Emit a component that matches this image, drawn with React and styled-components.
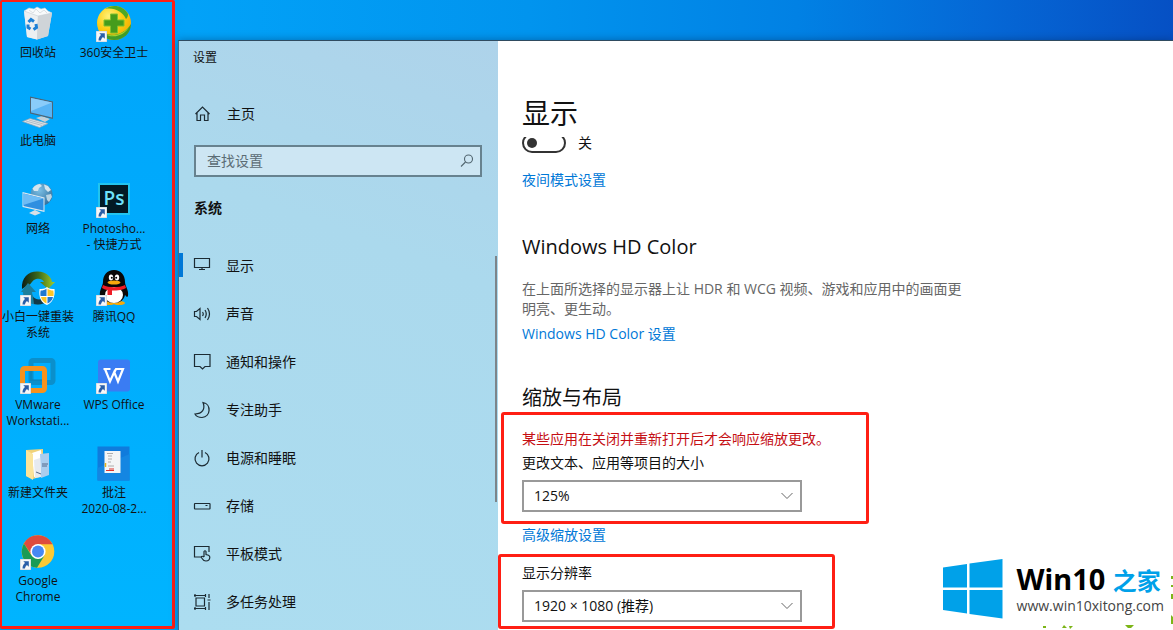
import React, { useState } from "react";
import styled, { createGlobalStyle } from "styled-components";

const GlobalStyle = createGlobalStyle`
  * {
    box-sizing: border-box;
  }

  body {
    margin: 0;
    font-family: "Open Sans", "Noto Sans CJK SC", sans-serif;
    font-size: 14px;
    line-height: 20px;
    color: #111;
  }

  button, input, select {
    font: inherit;
    color: inherit;
  }
`;

/* ---------- desktop icons ---------- */

const RecycleBinIcon = () => (
  <svg viewBox="0 0 36 36">
    <path d="M4 5L32 7L28 30L17 33.5L7 31Z" fill="#d5dade" />
    <path d="M4 5L18 9L17 33.5L7 31Z" fill="#eceff1" />
    <path d="M18 9L32 7L28 30L17 33.5Z" fill="#cfd4d8" />
    <path d="M4 5L9 2L14 3L17 1L21 3L25 2L28 5L32 7L18 10Z" fill="#f8fafb" stroke="#c8ced3" strokeWidth="0.6" />
    <path d="M9 4L13 7L16 3L20 7L24 4L27 7" fill="none" stroke="#d3d8dc" strokeWidth="0.8" />
    <path d="M8.500 16L11 13.500L14 15.500M16 18L16.500 21.500L13.500 23.500M10.500 23L8 21.500L8 18.500" fill="none" stroke="#1c7fd6" strokeWidth="3" />
  </svg>
);

const Safe360Icon = () => (
  <svg viewBox="0 0 36 36">
    <defs>
      <radialGradient id="safe" cx="0.35" cy="0.3" r="0.8">
        <stop offset="0" stopColor="#fff27a" />
        <stop offset="0.5" stopColor="#fccd12" />
        <stop offset="1" stopColor="#f0a800" />
      </radialGradient>
    </defs>
    <circle cx="18" cy="17" r="17" fill="url(#safe)" />
    <path d="M9 3C16 -2 27 -1 32 8C32 11 31 12 30 13C27 6 18 1 9 3Z" fill="#4ea825" />
    <path d="M35 18C35 29 24 37 12 33C7 31 4 28 3 25C12 31 27 31 35 18Z" fill="#3f9c2a" />
    <path d="M7 27C14 31 25 30 33 21C29 29 17 34 7 27Z" fill="#a8d32a" />
    <path d="M14.500 8H21.500V14H28V20H21.500V27H14.500V20H8V14H14.500Z" fill="#459c1c" stroke="#7fc02c" strokeWidth="1" />
  </svg>
);

const ComputerIcon = () => (
  <svg viewBox="0 0 36 36">
    <path d="M16 24L22 22L30 25L25 28Z" fill="#c4d0d8" />
    <path d="M10 2.500L33 7.500V25L10 19.500Z" fill="#4c6678" />
    <path d="M11 4L32 8.500V23.500L11 18.500Z" fill="#58b4f5" />
    <path d="M11 4L32 8.500L11 17Z" fill="#8accfa" />
    <path d="M2.500 27.500L10 24.500L28 29.500L19.500 33.500Z" fill="#dde4e9" stroke="#93a4af" strokeWidth="0.7" />
    <path d="M6 27L22 31.500M9 26L25 30.500" stroke="#9dacb6" strokeWidth="0.7" />
  </svg>
);

const NetworkIcon = () => (
  <svg viewBox="0 0 36 36">
    <defs>
      <radialGradient id="globe" cx="0.4" cy="0.3" r="0.75">
        <stop offset="0" stopColor="#7cc0e6" />
        <stop offset="1" stopColor="#2f6e9c" />
      </radialGradient>
    </defs>
    <circle cx="21.500" cy="12.500" r="11" fill="url(#globe)" />
    <path d="M12.500 6.500C15 3 18 2 20 2L22 4L19 6L18 9L14 9Z" fill="#d3e6f0" />
    <path d="M24 2.500L28 4L31 8L28 10L25 7Z" fill="#d3e6f0" />
    <path d="M26 13L31 12L32 15L29 20L27 18Z" fill="#b8d4e3" />
    <path d="M9 31L15 28L21 31L15 33.500Z" fill="#d7e0e6" />
    <path d="M2.500 10L24.500 15.500V30L2.500 25Z" fill="#dbe8f0" />
    <path d="M3.500 11.500L23.500 16.500V28.500L3.500 24Z" fill="#2f8fe0" />
    <path d="M3.500 11.500L23.500 16.500L3.500 23Z" fill="#6dbcf5" />
  </svg>
);

const PhotoshopIcon = () => (
  <svg viewBox="0 0 36 36">
    <rect x="2" y="1" width="32" height="32" fill="#22c4ee" />
    <rect x="4" y="3" width="28" height="28" fill="#021a24" />
    <text x="18" y="23" fill="#6fe3fb" fontSize="19" fontWeight="600" textAnchor="middle" fontFamily="Open Sans">
      Ps
    </text>
  </svg>
);

const ReinstallIcon = () => (
  <svg viewBox="0 0 36 36">
    <defs>
      <linearGradient id="swoop">
        <stop offset="0" stopColor="#0d1c14" />
        <stop offset="0.5" stopColor="#3c6b1e" />
        <stop offset="1" stopColor="#a6cf25" />
      </linearGradient>
    </defs>
    <path d="M2 19C1 7 9 1 18 1.500C26 2 31 6 32 12H35L28 19L20 12H24C22 8 17 8 14 10C11 12 11 15 8 15Z" fill="url(#swoop)" />
    <path d="M8 13L16 22H12C12 27 16 30 20 30L22 34C12 36 3 32 3 22H1Z" fill="#1c7f9d" />
    <path d="M13 27C17 31 23 30 26 25L28 31C25 34 19 35 14 34Z" fill="#123a48" />
    <path d="M27 17C29 19 32 19 34.500 19C35.500 27 32 33 27 35C21 33 18.500 27 19.500 19C22 19 25 19 27 17Z" fill="#fff" />
    <path d="M26.500 18.500V26H20.500C20.300 24 20.300 22 20.700 20.500C23 20.500 25 20 26.500 18.500ZM27.500 27H33C32.500 30 30 32.500 27.500 33.500Z" fill="#1f78d1" />
    <path d="M27.500 18.500C29 20 31 20.500 33.300 20.500C33.700 23 33.700 24 33.500 26H27.500ZM26.500 27H21C21.500 30 24 32.500 26.500 33.500Z" fill="#fdc526" />
  </svg>
);

const QQIcon = () => (
  <svg viewBox="0 0 36 36">
    <ellipse cx="13" cy="33" rx="6" ry="2" fill="#f6a90a" />
    <ellipse cx="23" cy="33" rx="6" ry="2" fill="#f6a90a" />
    <path d="M18 0C25 0 29 5 29 12C29 16 33 20 32 26C31 28 30 26 29 25C28 30 24 33 18 33C12 33 8 30 7 25C6 26 5 28 4 26C3 20 7 16 7 12C7 5 11 0 18 0Z" fill="#080808" />
    <ellipse cx="18" cy="25" rx="9" ry="8" fill="#fff" />
    <ellipse cx="15" cy="7.500" rx="2.200" ry="3" fill="#fff" />
    <ellipse cx="21" cy="7.500" rx="2.200" ry="3" fill="#fff" />
    <circle cx="15.800" cy="7.800" r="1" />
    <circle cx="20.200" cy="7.800" r="1" />
    <ellipse cx="18" cy="12.500" rx="6.500" ry="2" fill="#f7a80b" />
    <path d="M7 15C13 18 23 18 29 15L30 18C27 20 22 20.500 16 20.500V25H11.500V20C10 20 8 19 6 18Z" fill="#ee1c25" />
  </svg>
);

const VMwareIcon = () => (
  <svg viewBox="0 0 36 36">
    <rect x="11" y="2.500" width="22" height="22" rx="2" fill="none" stroke="#0b8fcb" strokeWidth="5" />
    <rect x="2.500" y="10.500" width="22" height="22" rx="2" fill="none" stroke="#f6921e" strokeWidth="5" />
    <path d="M11 13V22H22" fill="none" stroke="#0b7fb4" strokeWidth="2" opacity="0.5" />
  </svg>
);

const WpsIcon = () => (
  <svg viewBox="0 0 36 36">
    <rect x="2" y="1.500" width="32" height="32" rx="3" fill="#3a7cf3" />
    <path d="M7.500 11H14.500M9 11L14 23.500L18.200 14L22 23.500L27 11H20L17 17" fill="none" stroke="#fff" strokeWidth="2.200" />
  </svg>
);

const FolderIcon = () => (
  <svg viewBox="0 0 36 36">
    <path d="M6 4L23 3V30L13 33L6 30Z" fill="#f0d27a" />
    <path d="M12 7L21 4L23 29L14 31Z" fill="#fff" />
    <path d="M20 8L29 7V29L21 32Z" fill="#a9cdee" />
    <path d="M14 14L20 12L21 31L15 32Z" fill="#e6eaf0" />
    <path d="M22 18H28M22 20H27M16 26L21 28" stroke="#55698a" strokeWidth="1" />
    <path d="M6 4L13 8V34L6 30Z" fill="#fbe49a" />
  </svg>
);

const NoteIcon = () => (
  <svg viewBox="0 0 36 36">
    <rect x="1.500" y="0.500" width="32" height="34" fill="#0f7bdc" />
    <path d="M1.500 22L33.500 8V34.500H1.500Z" fill="#1486e2" />
    <rect x="8.500" y="5" width="16" height="22" fill="#f3f5f6" />
    <path d="M11 7.500H17M12 10H16M12 13H16M12 16H15M12 20H18" stroke="#999" strokeWidth="0.8" />
    <path d="M9.500 17V21" stroke="#e3b21c" strokeWidth="1.500" />
    <path d="M10 24.500H18M13 23H18" stroke="#e0322c" strokeWidth="1" />
  </svg>
);

const ChromeIcon = () => (
  <svg viewBox="0 0 36 36">
    <circle cx="18" cy="17.500" r="16.300" fill="#fcc934" />
    <path d="M3.900 9.400A16.300 16.300 0 0 1 32.600 10.300L18 10.300L11.800 21Z" fill="#dd4b3e" />
    <path d="M3.900 9.400A16.300 16.300 0 0 0 17 33.800L24.500 21.500L18 25L11.500 21.500Z" fill="#1a9b55" />
    <circle cx="18" cy="17.500" r="7.600" fill="#fff" />
    <circle cx="18" cy="17.500" r="6" fill="#4688f4" />
  </svg>
);

const ShortcutArrow = () => (
  <ShortcutBadge viewBox="0 0 10 10">
    <rect width="10" height="10" fill="#f6f7f8" stroke="#b9c6cf" strokeWidth="0.8" />
    <path d="M3 2H8V7L6.300 5.400C5 6.500 4.700 7.500 4.500 8.700H2.300C2.300 6.500 3 5 4.600 3.700Z" fill="#2a5ea8" />
  </ShortcutBadge>
);

/* ---------- settings icons ---------- */

const LineIcon = ({ children }) => (
  <svg width="18" height="18" viewBox="0 0 18 18" fill="none" stroke="#1c2b33" strokeWidth="1.200">
    {children}
  </svg>
);

const HomeGlyph = () => (
  <LineIcon>
    <path d="M1.500 9L8.500 2L15.500 9M3 8V15.500H6.500V10H10.500V15.500H14V8" />
  </LineIcon>
);

const navItems = [
  {
    label: "显示",
    icon: <path d="M1.500 1.500H16.500V10.500H1.500ZM9 10.500V12.500M6 12.500H12" />,
  },
  {
    label: "声音",
    icon: (
      <path d="M1.500 6.500H3.500L7 3.500V14.500L3.500 11.500H1.500ZM9.500 7Q11 9 9.500 11M12 5Q14.500 9 12 13M14.500 3Q18.500 9 14.500 15" />
    ),
  },
  {
    label: "通知和操作",
    icon: <path d="M1.500 1.500H17V13.500H12L9.500 16L7 13.500H1.500Z" />,
  },
  {
    label: "专注助手",
    icon: <path d="M10 1.500C18.500 3 18 16 9 16.500C5.500 16.500 3 15 2 13C9.500 13 12.500 8 10 1.500Z" />,
  },
  {
    label: "电源和睡眠",
    icon: <path d="M6 3.500A7 7 0 1 0 12 3.500M9 1V8.500" />,
  },
  {
    label: "存储",
    icon: <path d="M2 6.500H16.500Q17 6.500 17 7V11.500Q17 12 16.500 12H2Q1.500 12 1.500 11.500V7Q1.500 6.500 2 6.500ZM12.500 8.500H14.500" />,
  },
  {
    label: "平板模式",
    icon: (
      <path d="M8 12H1.500V1.500H16V7M11 12V6.500Q12 5 13 6.500V9.500L15.500 10.200Q17 11 16.800 12.500Q16.500 16 13 16Q10.500 16 9.500 14L8 12Q9 10.500 11 12" />
    ),
  },
  {
    label: "多任务处理",
    icon: (
      <path d="M3 5H11.500V13H3ZM1 2.500H13M1 15.500H13M2 1V4M12.500 1V4M2 14V17M12.500 14V17M16 1V5M16 9V17M14.500 7H17.500" />
    ),
  },
];

const desktopItems = [
  { row: 1, col: 1, lines: ["回收站"], icon: <RecycleBinIcon /> },
  { row: 1, col: 2, lines: ["360安全卫士"], icon: <Safe360Icon />, shortcut: true },
  { row: 2, col: 1, lines: ["此电脑"], icon: <ComputerIcon /> },
  { row: 3, col: 1, lines: ["网络"], icon: <NetworkIcon /> },
  { row: 3, col: 2, lines: ["Photosho...", "- 快捷方式"], icon: <PhotoshopIcon />, shortcut: true },
  { row: 4, col: 1, lines: ["小白一键重装", "系统"], icon: <ReinstallIcon />, shortcut: true },
  { row: 4, col: 2, lines: ["腾讯QQ"], icon: <QQIcon />, shortcut: true },
  { row: 5, col: 1, lines: ["VMware", "Workstati..."], icon: <VMwareIcon />, shortcut: true },
  { row: 5, col: 2, lines: ["WPS Office"], icon: <WpsIcon />, shortcut: true },
  { row: 6, col: 1, lines: ["新建文件夹"], icon: <FolderIcon /> },
  { row: 6, col: 2, lines: ["批注", "2020-08-2..."], icon: <NoteIcon /> },
  { row: 7, col: 1, lines: ["Google", "Chrome"], icon: <ChromeIcon />, shortcut: true },
];

const SelectBox = ({ id, options }) => (
  <SelectWrapper>
    <select id={id}>
      {options.map((option) => (
        <option key={option}>{option}</option>
      ))}
    </select>
    <svg width="12" height="8" viewBox="0 0 12 8" fill="none" stroke="#666" strokeWidth="1">
      <path d="M0.500 1L6 6.500L11.500 1" />
    </svg>
  </SelectWrapper>
);

const App = () => {
  const [active, setActive] = useState("显示");
  const [nightLight, setNightLight] = useState(false);

  return (
    <Page>
      <GlobalStyle />
      <DesktopPane>
        {desktopItems.map((item) => (
          <DesktopItem key={item.lines[0]} $row={item.row} $col={item.col}>
            <DesktopIcon>
              {item.icon}
              {item.shortcut && <ShortcutArrow />}
            </DesktopIcon>
            {item.lines.map((line) => (
              <DesktopLabel key={line}>{line}</DesktopLabel>
            ))}
          </DesktopItem>
        ))}
      </DesktopPane>

      <SettingsWindow>
        <Sidebar>
          <WindowTitle>设置</WindowTitle>
          <HomeButton>
            <HomeGlyph />
            主页
          </HomeButton>
          <SearchBox>
            <input type="text" placeholder="查找设置" aria-label="查找设置" />
            <svg width="14" height="14" viewBox="0 0 14 14" fill="none" stroke="#51656f" strokeWidth="1.100">
              <circle cx="8.500" cy="5" r="4" />
              <path d="M5.500 8L1 12.500" />
            </svg>
          </SearchBox>
          <GroupTitle>系统</GroupTitle>
          <NavList>
            {navItems.map((item) => (
              <NavItem
                key={item.label}
                $active={item.label === active}
                onClick={() => setActive(item.label)}
              >
                <LineIcon>{item.icon}</LineIcon>
                {item.label}
              </NavItem>
            ))}
            <ScrollThumb />
          </NavList>
        </Sidebar>

        <Content>
          <PageTitle>显示</PageTitle>
          <ToggleRow>
            <input
              type="checkbox"
              checked={nightLight}
              onChange={(e) => setNightLight(e.target.checked)}
            />
            {nightLight ? "开" : "关"}
          </ToggleRow>
          <Section $top={17}>
            <TextLink href="#night">夜间模式设置</TextLink>
          </Section>
          <Section $top={43}>
            <SectionTitle>Windows HD Color</SectionTitle>
            <Description>
              在上面所选择的显示器上让 HDR 和 WCG 视频、游戏和应用中的画面更明亮、更生动。
            </Description>
            <TextLink href="#hdcolor">Windows HD Color 设置</TextLink>
          </Section>
          <Section $top={40}>
            <SectionTitle>缩放与布局</SectionTitle>
          </Section>
          <ScaleFrame>
            <Warning>某些应用在关闭并重新打开后才会响应缩放更改。</Warning>
            <FieldLabel htmlFor="scale">更改文本、应用等项目的大小</FieldLabel>
            <SelectBox id="scale" options={["125%", "100%", "150%", "175%"]} />
          </ScaleFrame>
          <Section $top={1}>
            <TextLink href="#scaling">高级缩放设置</TextLink>
          </Section>
          <ResolutionFrame>
            <FieldLabel htmlFor="resolution">显示分辨率</FieldLabel>
            <SelectBox id="resolution" options={["1920 × 1080 (推荐)", "1600 × 900", "1280 × 720"]} />
          </ResolutionFrame>
        </Content>
      </SettingsWindow>

      <Watermark>
        <svg width="60" height="60" viewBox="0 0 60 60" fill="#00a1e9">
          <path d="M0 8.500L24 5V28.500H0ZM26.500 4.500L59.500 0V28.500H26.500ZM0 31H24V54.500L0 51ZM26.500 31H59.500V59.500L26.500 55Z" />
        </svg>
        <div>
          <Brand>
            Win10 <span>之家</span>
          </Brand>
          <SiteAddress>www.win10xitong.com</SiteAddress>
        </div>
      </Watermark>
      <LeafSpecks width="130" height="56" viewBox="0 0 130 56" fill="#7cb518">
        <path d="M0 52H3V54H0ZM21 51L24 54H19ZM26 52H30L27 55ZM82 51H91L88 54H85ZM128 2H130V5H128ZM128 11H130V13H128ZM128 20H130V25H128ZM128 41L130 43V50H128Z" />
      </LeafSpecks>
    </Page>
  );
};

const Page = styled.div`
  position: relative;
  display: grid;
  grid-template-columns: auto 1fr;
  column-gap: 3px;
  min-height: 100vh;
  overflow: hidden;
  background: linear-gradient(
    to right,
    #0098e6 0,
    #02a2f8 16%,
    #0194ee 45%,
    #0181e4 68%,
    #0568d6 84%,
    #0650c4 100%
  );
`;

const DesktopPane = styled.nav`
  display: grid;
  grid-template-columns: 72px 72px;
  grid-auto-rows: 88px;
  column-gap: 4px;
  width: 175px;
  margin-bottom: 1px;
  padding-top: 4px;
  border: solid #ff1f14;
  border-width: 2px 3px 3px 2px;
  border-radius: 2px;
  background: linear-gradient(to bottom, #00a5fb, #00b4ff);
`;

const DesktopItem = styled.button`
  grid-row: ${({ $row }) => $row};
  grid-column: ${({ $col }) => $col};
  display: flex;
  flex-direction: column;
  align-items: center;
  padding: 0;
  border: none;
  background: none;
  font-size: 12px;
  line-height: 16px;
`;

const DesktopIcon = styled.span`
  position: relative;
  width: 36px;
  height: 36px;
  margin-bottom: 3px;

  svg {
    display: block;
  }
`;

const ShortcutBadge = styled.svg`
  position: absolute;
  left: 0;
  bottom: 0;
  width: 11px;
  height: 11px;
`;

const DesktopLabel = styled.span`
  white-space: nowrap;
`;

const SettingsWindow = styled.main`
  display: flex;
  min-width: 0;
  margin-top: 40px;
  border-top: 1px solid #2f4b60;
  border-left: 1px solid #3d6f8c;
  background: #fff;
  box-shadow: 0 0 8px rgba(0, 30, 70, 0.4);
`;

const Sidebar = styled.aside`
  flex: 0 0 319px;
  padding-top: 7px;
  background: linear-gradient(200deg, #aed3ea 0%, #abd9ed 35%, #acddf0 100%);
`;

const WindowTitle = styled.div`
  padding-left: 14px;
  font-size: 12px;
`;

const HomeButton = styled.button`
  display: flex;
  align-items: center;
  gap: 15px;
  width: 100%;
  height: 48px;
  margin-top: 22px;
  padding: 0 15px;
  border: none;
  background: none;
`;

const SearchBox = styled.div`
  display: flex;
  align-items: center;
  height: 32px;
  margin: 7px 16px 0 15px;
  padding: 0 6px 0 11px;
  border: 2px solid #67828f;
  background: #cde6f3;

  input {
    flex: 1;
    min-width: 0;
    padding: 0;
    border: none;
    outline: none;
    background: none;
  }

  input::placeholder {
    color: #5b6c75;
  }
`;

const GroupTitle = styled.h2`
  margin: 21px 0 24px 15px;
  font-size: 14px;
  line-height: 20px;
`;

const NavList = styled.nav`
  position: relative;
`;

const NavItem = styled.button`
  position: relative;
  display: flex;
  align-items: center;
  gap: 15px;
  width: 100%;
  height: 48px;
  padding: 0 14px;
  border: none;
  background: none;

  &::before {
    content: "";
    position: absolute;
    left: 0;
    top: 11px;
    width: 4px;
    height: 24px;
    background: ${({ $active }) => ($active ? "#0078d7" : "transparent")};
  }
`;

const ScrollThumb = styled.span`
  position: absolute;
  top: 14px;
  right: 1px;
  width: 2px;
  height: 246px;
  background: #7d8489;
`;

const Content = styled.section`
  flex: 1;
  min-width: 0;
  padding-top: 54px;
`;

const PageTitle = styled.h1`
  margin: 0;
  padding-left: 24px;
  font-size: 28px;
  font-weight: 400;
  line-height: 36px;
`;

/* the switch is half scrolled under the page title */
const ToggleRow = styled.label`
  display: flex;
  align-items: center;
  gap: 12px;
  height: 20px;
  margin: 2px 0 0 24px;

  input {
    appearance: none;
    display: flex;
    align-items: center;
    width: 44px;
    height: 20px;
    margin: 0;
    padding: 0 3px;
    border: 2px solid #333;
    border-radius: 10px;
    clip-path: inset(4px 0 0 0);
  }

  input::before {
    content: "";
    width: 10px;
    height: 10px;
    border-radius: 50%;
    background: #333;
  }

  input:checked {
    justify-content: flex-end;
  }
`;

const Section = styled.div`
  max-width: 490px;
  margin-top: ${({ $top }) => $top}px;
  padding: 0 24px;
`;

const SectionTitle = styled.h2`
  margin: 0;
  font-size: 20px;
  font-weight: 400;
  line-height: 28px;
`;

const Description = styled.p`
  margin: 18px 0 5px;
  color: #666;
`;

const TextLink = styled.a`
  display: block;
  color: #0078d7;
  text-decoration: none;
`;

const RedFrame = styled.div`
  border: 3px solid #ff1f14;
  border-radius: 3px;
`;

const ScaleFrame = styled(RedFrame)`
  max-width: 368px;
  margin-left: 3px;
  padding: 14px 18px 9px;
`;

const ResolutionFrame = styled(RedFrame)`
  max-width: 337px;
  margin-top: 9px;
  padding: 6px 21px 4px;
`;

const Warning = styled.p`
  margin: 0 0 4px;
  color: #c50f14;
`;

const FieldLabel = styled.label`
  display: block;
  margin-bottom: 7px;
`;

const SelectWrapper = styled.div`
  position: relative;
  max-width: 280px;

  select {
    display: block;
    appearance: none;
    width: 100%;
    height: 32px;
    padding: 0 10px;
    border: 2px solid #999;
    border-radius: 0;
    background: #fff;
  }

  svg {
    position: absolute;
    right: 9px;
    top: 12px;
    pointer-events: none;
  }
`;

const Watermark = styled.aside`
  position: absolute;
  right: 9px;
  bottom: 11px;
  display: flex;
  align-items: center;
  gap: 14px;
`;

const Brand = styled.div`
  font-family: "Noto Sans", "Noto Sans CJK SC", sans-serif;
  font-size: 29px;
  font-weight: 700;
  line-height: 32px;
  color: #000;
  white-space: nowrap;

  span {
    font-size: 24px;
    color: #00a1e9;
  }
`;

const SiteAddress = styled.div`
  font-size: 14px;
  line-height: 18px;
  color: #444;
`;

const LeafSpecks = styled.svg`
  position: absolute;
  right: 0;
  bottom: 0;
`;

export default App;
